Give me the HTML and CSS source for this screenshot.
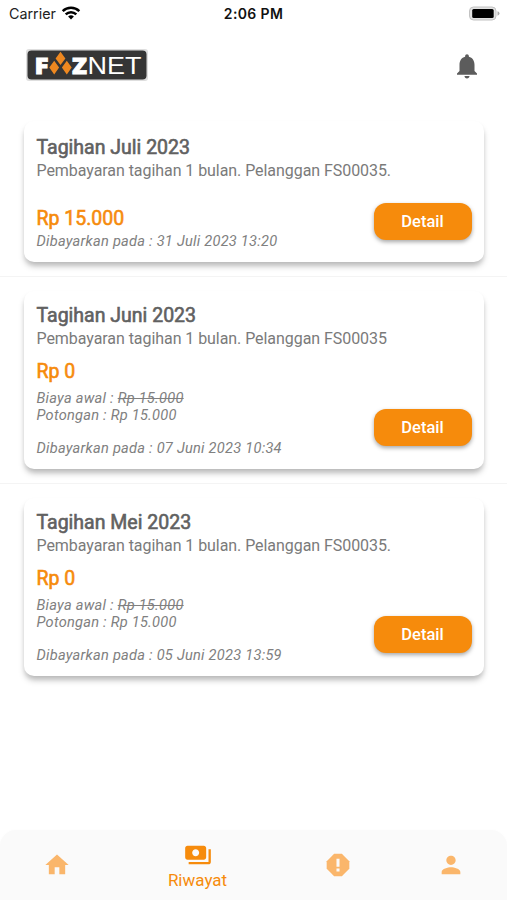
FILE: index.html
```html
<!DOCTYPE html>
<html lang="id">
<head>
<meta charset="utf-8">
<title>Riwayat</title>
<link rel="stylesheet" href="styles.css">
</head>
<body>
<div class="status">
  <div class="carrier"><span>Carrier</span>
    <svg width="20" height="14" viewBox="0 0 20 14" fill="none" stroke="#000" stroke-width="2.5"><path d="M1.7 5.2a12 12 0 0 1 16.6 0M4.7 8.4a7.6 7.6 0 0 1 10.6 0"/><path d="M10 13.5 7.1 10.6a4.2 4.2 0 0 1 5.8 0z" fill="#000" stroke="none"/></svg>
  </div>
  <div class="clock">2:06 PM</div>
  <svg class="battery" width="32" height="16" viewBox="0 0 32 16"><rect x="1.500" y="1" width="26.5" height="13" rx="4" fill="#e2e2e2" stroke="#c2c2c2"/><rect x="4.200" y="3" width="21.500" height="9" rx="1.500" fill="#000"/><path d="M29.500 5.3q2 .6 2 2.2t-2 2.2z" fill="#aaa"/></svg>
</div>
<header class="header">
  <svg class="logo" width="122" height="32" viewBox="0 0 122 32">
    <rect width="122" height="32" rx="3" fill="#dedede"/><rect x="1.500" y="1.500" width="119" height="29" rx="4" fill="#353535"/>
    <text class="logo-bold" x="8.5" y="25" textLength="14" lengthAdjust="spacingAndGlyphs">F</text>
    <text class="logo-bold" x="46" y="25" textLength="15" lengthAdjust="spacingAndGlyphs">Z</text>
    <text class="logo-thin" x="61.5" y="25.2" textLength="54" lengthAdjust="spacingAndGlyphs">NET</text>
    <g fill="#ee8820"><path d="m34.5 2.800 4.900 6.600-4.900 6.600-4.900-6.600zM28.2 11.800l4.900 6.800-4.900 6.800-4.900-6.800zM40.8 11.800l4.900 6.800-4.900 6.800-4.900-6.800z"/></g>
  </svg>
  <svg class="bell" width="30" height="30" viewBox="0 0 24 24" fill="#5c5c5c"><path d="M12 22c1.1 0 2-.9 2-2h-4c0 1.1.9 2 2 2zm6-6v-5c0-3.07-1.64-5.64-4.5-6.32V4c0-.83-.67-1.5-1.5-1.5s-1.5.67-1.5 1.5v.68C7.63 5.36 6 7.92 6 11v5l-2 2v1h16v-1l-2-2z"/></svg>
</header>
<main class="list">
  <section class="item">
    <article class="card card-short">
      <h2>Tagihan Juli 2023</h2>
      <p class="desc">Pembayaran tagihan 1 bulan. Pelanggan FS00035.</p>
      <div class="price price-low">Rp 15.000</div>
      <p class="paid">Dibayarkan pada : 31 Juli 2023 13:20</p>
      <button class="detail">Detail</button>
    </article>
  </section>
  <section class="item">
    <article class="card">
      <h2>Tagihan Juni 2023</h2>
      <p class="desc">Pembayaran tagihan 1 bulan. Pelanggan FS00035</p>
      <div class="price">Rp 0</div>
      <p class="note">Biaya awal : <s>Rp 15.000</s><br>Potongan : Rp 15.000</p>
      <p class="paid">Dibayarkan pada : 07 Juni 2023 10:34</p>
      <button class="detail">Detail</button>
    </article>
  </section>
  <section class="item">
    <article class="card">
      <h2>Tagihan Mei 2023</h2>
      <p class="desc">Pembayaran tagihan 1 bulan. Pelanggan FS00035.</p>
      <div class="price">Rp 0</div>
      <p class="note">Biaya awal : <s>Rp 15.000</s><br>Potongan : Rp 15.000</p>
      <p class="paid">Dibayarkan pada : 05 Juni 2023 13:59</p>
      <button class="detail">Detail</button>
    </article>
  </section>
</main>
<nav class="nav">
  <a class="tab"><svg width="28" height="28" viewBox="0 0 24 24"><path d="M10 20v-6h4v6h5v-8h3L12 3 2 12h3v8z"/></svg></a>
  <a class="tab active"><svg width="28" height="28" viewBox="0 0 24 24"><path d="M19 14V6c0-1.100-.9-2-2-2H3c-1.100 0-2 .9-2 2v8c0 1.100.9 2 2 2h14c1.100 0 2-.9 2-2zm-9-1c-1.660 0-3-1.340-3-3s1.340-3 3-3 3 1.340 3 3-1.340 3-3 3zm13-6v11c0 1.100-.9 2-2 2H4v-2h17V7h2z"/></svg><span>Riwayat</span></a>
  <a class="tab"><svg width="28" height="28" viewBox="0 0 24 24"><path d="M8.700 2.300h6.600l6.400 6.400v6.600l-6.400 6.400H8.700l-6.400-6.400V8.700z"/><path d="M10.700 6.700h2.600v6.800h-2.600zM10.700 15h2.600v2.500h-2.600z" fill="#fafafa"/></svg></a>
  <a class="tab"><svg width="28" height="28" viewBox="0 0 24 24"><path d="M12 12c2.210 0 4-1.790 4-4s-1.790-4-4-4-4 1.790-4 4 1.790 4 4 4zm0 2c-2.670 0-8 1.340-8 4v2h16v-2c0-2.660-5.330-4-8-4z"/></svg></a>
</nav>
</body>
</html>
```
FILE: styles.css
```css
* { box-sizing: border-box; }
body {
  margin: 0;
  height: 900px;
  display: flex;
  flex-direction: column;
  overflow: hidden;
  background: #fff;
  color: #7a7a7a;
  font-family: Roboto, sans-serif;
}
h2, p { margin: 0; }
.status {
  height: 27px;
  padding: 0 7px 0 9px;
  display: grid;
  grid-template-columns: 1fr auto 1fr;
  align-items: center;
  font-family: Inter, sans-serif;
  color: #222;
}
.carrier { display: flex; align-items: center; gap: 5px; font-size: 14.3px; }
.carrier svg { margin-top: -2px; }
.clock { font-size: 14px; font-weight: 600; color: #111; letter-spacing: .35px; margin-right: 2px; }
.battery { justify-self: end; }
.header {
  height: 80px;
  padding: 0 25px 3px 26px;
  display: flex;
  align-items: center;
  justify-content: space-between;
}
.logo { margin-top: -1px; }
.logo-bold { font: 900 23px "Open Sans", sans-serif; fill: #fff; stroke: #fff; stroke-width: .8px; }
.logo-thin { font: 400 24.500px "Liberation Sans", sans-serif; fill: #fff; }
.list { flex: 1; }
.item { padding: 14px 23px 14px 24px; border-bottom: 1px solid #f4f4f4; }
.item:last-child { border-bottom: 0; }
.card {
  position: relative;
  height: 178px;
  padding: 13px 12px 0 12.500px;
  border-radius: 10px;
  background: #fff;
  box-shadow: 0 5px 6px -1px rgba(0, 0, 0, .25), 0 3px 4px rgba(0, 0, 0, .05);
}
.card-short { height: 141px; padding-top: 14px; }
.card h2 {
  font-size: 19.500px;
  line-height: 24px;
  font-weight: 400;
  color: #616161;
  -webkit-text-stroke: .6px #616161;
}
.card-short h2 { padding-top: 1px; line-height: 23px; }
.desc { font-size: 16px; line-height: 22px; letter-spacing: -.06px; }
.card-short .desc { padding-top: 1px; }
.price {
  margin-top: 10px;
  font-size: 19.500px;
  line-height: 24px;
  color: #f68b0c;
  -webkit-text-stroke: .6px #f68b0c;
}
.price-low { margin-top: 25px; }
.note { margin-top: 6px; font-size: 14.600px; line-height: 17px; font-style: italic; letter-spacing: .25px; color: #808080; }
.paid { font-size: 14.600px; line-height: 22px; font-style: italic; letter-spacing: .25px; color: #808080; }
.price-low + .paid { line-height: 20px; }
.note + .paid { margin-top: 13px; }
.detail {
  position: absolute;
  right: 12.500px;
  bottom: 23px;
  width: 98px;
  height: 37px;
  padding: 0;
  border: 0;
  border-radius: 12px;
  background: #f68b0c;
  color: #fff;
  font: 500 16.500px Roboto, sans-serif;
  box-shadow: 0 2px 4px rgba(0, 0, 0, .35);
}
.card-short .detail { bottom: 22px; }
.nav {
  height: 70px;
  display: grid;
  grid-template-columns: 113px 169px 112px 113px;
  background: #fafafa;
  border-radius: 16px 16px 0 0;
  box-shadow: 0 0 3px rgba(0, 0, 0, .02);
}
.tab {
  display: flex;
  flex-direction: column;
  align-items: center;
  justify-content: center;
  fill: #fab66b;
}
.tab.active { fill: #f68b0c; color: #f68b0c; font-size: 17px; line-height: 22px; }
.tab.active svg { margin-top: 1px; }
```
